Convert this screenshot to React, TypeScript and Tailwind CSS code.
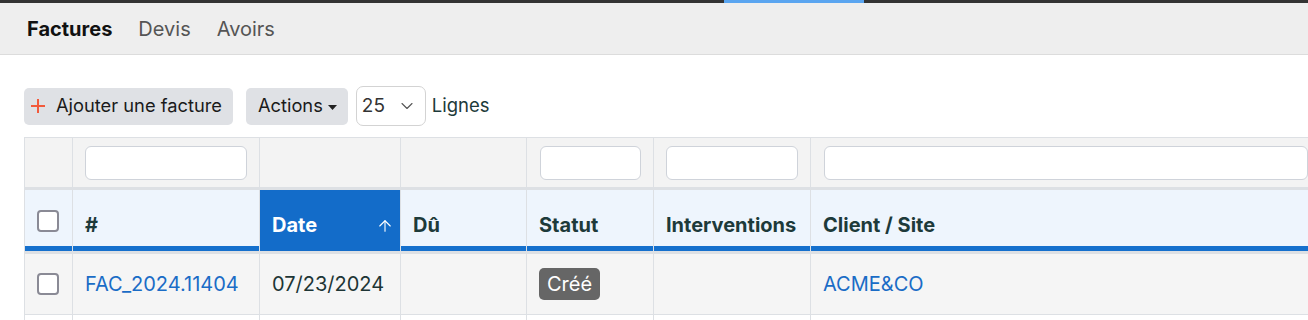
import { ArrowUp, ChevronDown } from 'lucide-react'

const COLS = 'grid grid-cols-[47px_186px_140px_125px_126px_156px_1fr] gap-x-px'

function Checkbox() {
  return <div className="w-[22px] h-[22px] rounded-[4px] border-[2.5px] border-[#8a8a95] bg-white" />
}

function FilterInput() {
  return <div className="w-full h-[34px] rounded-[6px] border border-[#cfd3da] bg-white" />
}

export default function App() {
  const headers = ['Dû', 'Statut', 'Interventions', 'Client / Site']

  return (
    <div className="min-h-[320px] bg-white font-['Inter','Liberation_Sans',sans-serif] text-[18px] text-[#1d3a3a]">
      {/* top bar */}
      <div className="flex h-[3px] bg-[#333333]">
        <div className="w-[724px]" />
        <div className="w-[140px] bg-[#5aa5f0]" />
      </div>

      {/* tabs */}
      <div className="flex items-center gap-[26px] h-[52px] pl-[27px] bg-[#eeeeee] border-b border-[#dcdcdc] text-[20px]">
        <span className="font-bold text-[#111111]">Factures</span>
        <span className="text-[#555555]">Devis</span>
        <span className="text-[#555555]">Avoirs</span>
      </div>

      {/* toolbar */}
      <div className="flex items-center pl-6 mt-[31px] h-[40px] text-[18.3px]">
        <button className="flex items-center h-[37px] pl-[7px] pr-[11px] rounded-[5px] bg-[#dfe1e5] text-[#1a1a1a]">
          <svg width="14" height="14" viewBox="0 0 14 14" className="mr-[11px]">
            <path d="M7 0v14M0 7h14" stroke="#f25a3c" strokeWidth="2" />
          </svg>
          Ajouter une facture
        </button>
        <button className="flex items-center h-[37px] ml-[13px] pl-3 pr-[11px] rounded-[5px] bg-[#dfe1e5] text-[#1a1a1a]">
          Actions
          <svg width="9" height="5" viewBox="0 0 9 5" className="ml-[5px] mt-[2px]">
            <path d="M0 0h9L4.5 5z" fill="#222" />
          </svg>
        </button>
        <div className="flex items-center justify-between w-[70px] h-[40px] ml-2 pl-[5px] pr-[8px] rounded-[7px] border border-[#d3d3d3] text-[#333] text-[19px]">
          <span>25</span>
          <ChevronDown size={20} strokeWidth={1.3} className="text-[#555]" />
        </div>
        <span className="ml-[6px] text-[#1d3a3a] text-[18.5px]">Lignes</span>
      </div>

      {/* table */}
      <div className="mt-[11px] ml-6 border-t border-l border-[#dde0e4] bg-[#dde0e4] overflow-hidden text-[20px] leading-[24px]">
        {/* filters */}
        <div className={`${COLS} border-b-[3px] border-[#dde0e4]`}>
          <div className="h-[49px] bg-[#f3f3f3]" />
          <div className="flex items-center px-3 bg-[#f3f3f3]"><FilterInput /></div>
          <div className="bg-[#f3f3f3]" />
          <div className="bg-[#f3f3f3]" />
          <div className="flex items-center pl-[13px] pr-3 bg-[#f3f3f3]"><FilterInput /></div>
          <div className="flex items-center px-3 bg-[#f3f3f3]"><FilterInput /></div>
          <div className="flex items-center pl-[13px] bg-[#f3f3f3]"><FilterInput /></div>
        </div>

        {/* header */}
        <div className={`${COLS} border-b-[3px] border-[#dde0e4] font-bold`}>
          <div className="h-[61px] pt-[20px] pl-3 bg-[#eef5fd] border-b-[5px] border-[#1570cd]">
            <Checkbox />
          </div>
          <div className="flex items-end pb-[9px] px-3 bg-[#eef5fd] border-b-[5px] border-[#1570cd]">#</div>
          <div className="flex items-end justify-between pb-[9px] pl-3 pr-[6px] bg-[#136cc9] text-white border-b-[5px] border-[#136cc9]">
            <span>Date</span>
            <ArrowUp size={18} strokeWidth={1.5} className="mb-[2px]" />
          </div>
          {headers.map(h => (
            <div key={h} className="flex items-end pb-[9px] px-3 bg-[#eef5fd] border-b-[5px] border-[#1570cd] whitespace-nowrap">
              {h}
            </div>
          ))}
        </div>

        {/* row */}
        <div className={`${COLS} border-b border-[#dde0e4]`}>
          <div className="flex items-center h-[60px] pl-3 bg-[#f5f5f5]"><Checkbox /></div>
          <div className="flex items-center px-3 bg-[#f5f5f5] text-[#1a6cc6]">FAC_2024.11404</div>
          <div className="flex items-center px-3 bg-[#f5f5f5] text-[#1d3535]">07/23/2024</div>
          <div className="bg-[#f5f5f5]" />
          <div className="flex items-center px-3 bg-[#f5f5f5]">
            <span className="px-[8px] h-[32px] leading-[32px] rounded-[5px] bg-[#666666] text-white">Créé</span>
          </div>
          <div className="bg-[#f5f5f5]" />
          <div className="flex items-center px-3 bg-[#f5f5f5] text-[#1a6cc6]">ACME&amp;CO</div>
        </div>
        <div className={COLS}>
          {[0, 1, 2, 3, 4, 5, 6].map(i => <div key={i} className="h-[20px] bg-white" />)}
        </div>
      </div>
    </div>
  )
}
